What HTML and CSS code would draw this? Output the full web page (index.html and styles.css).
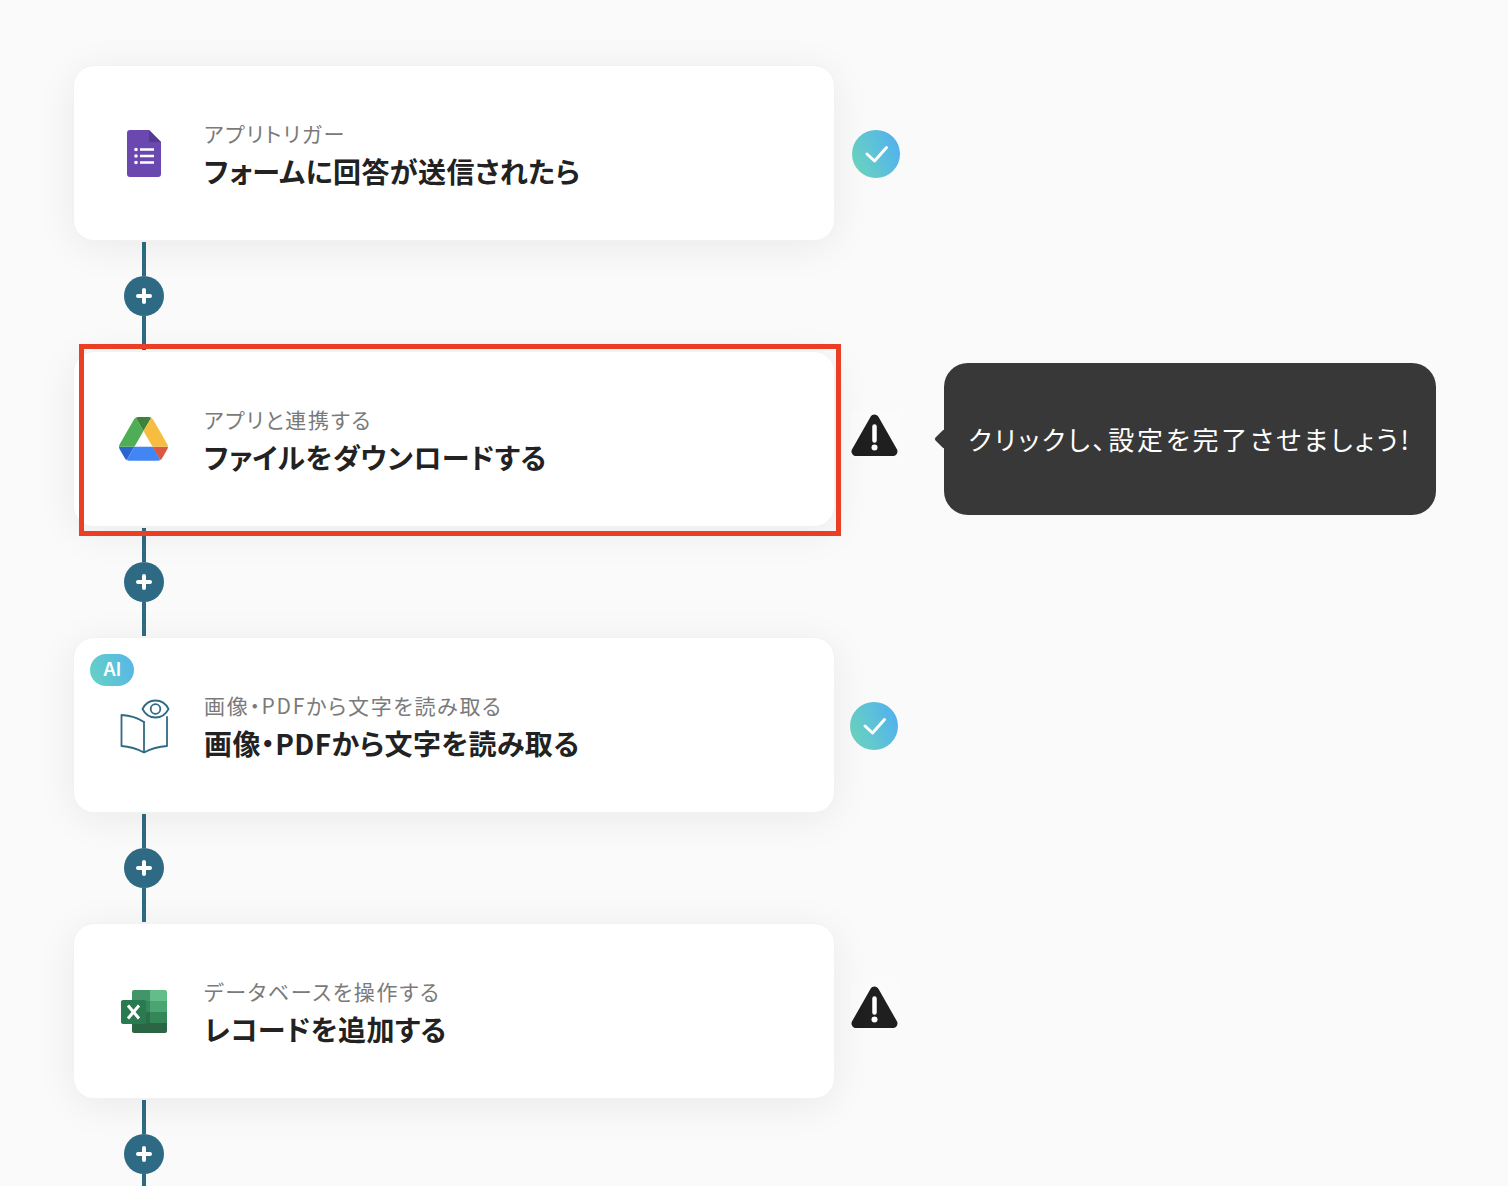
FILE: index.html

```html
<!DOCTYPE html>
<html lang="ja">
<head>
  <meta charset="UTF-8" />
  <meta name="viewport" content="width=device-width, initial-scale=1.0"/>
  <title>フロー</title>
  <link rel="stylesheet" href="styles.css">
</head>
<body>
  <div class="flow">

    <div class="step">
      <div class="card">
        <svg class="app-icon" viewBox="0 0 60 60">
          <path d="M16 7h19l12 12v32a3 3 0 0 1-3 3H16a3 3 0 0 1-3-3V10a3 3 0 0 1 3-3z" fill="#6b48b0"/>
          <path d="M35 7l12 12H35z" fill="#553a92"/>
          <circle cx="22" cy="26.500" r="1.800" fill="#fff"/>
          <circle cx="22" cy="33" r="1.800" fill="#fff"/>
          <circle cx="22" cy="39.500" r="1.800" fill="#fff"/>
          <path d="M26 26.500h14M26 33h14M26 39.500h14" stroke="#fff" stroke-width="2.600"/>
        </svg>
        <div class="card-text">
          <div class="card-sub">アプリトリガー</div>
          <div class="card-title">フォームに回答が送信されたら</div>
        </div>
      </div>
      <div class="status status-first">
        <svg class="check" viewBox="0 0 48 48">
          <defs>
            <linearGradient id="grad1" x1="0" y1="0.8" x2="1" y2="0.4">
              <stop offset="0" stop-color="#6cd5bd"/>
              <stop offset="1" stop-color="#52b2ed"/>
            </linearGradient>
          </defs>
          <circle cx="24" cy="24" r="24" fill="url(#grad1)"/>
          <path d="M15 24l7.500 7L34.500 17.500" fill="none" stroke="#fff" stroke-width="3" stroke-linecap="round" stroke-linejoin="round"/>
        </svg>
      </div>
    </div>

    <div class="connector"><span class="line"></span><span class="plus"></span><span class="line"></span></div>

    <div class="step">
      <div class="card">
        <svg class="app-icon" viewBox="0 0 60 60">
          <g transform="translate(5 8) scale(0.561)">
            <path d="m6.600 66.850 3.850 6.650c.8 1.400 1.950 2.500 3.300 3.300l13.750-23.800h-27.500c0 1.550.4 3.100 1.200 4.500z" fill="#2b66d0"/>
            <path d="m43.650 25-13.750-23.800c-1.350.8-2.500 1.900-3.300 3.300l-25.400 44a9.060 9.060 0 0 0 -1.200 4.500h27.500z" fill="#4fae55"/>
            <path d="m73.550 76.800c1.350-.8 2.500-1.900 3.300-3.300l1.600-2.750 7.650-13.250c.8-1.400 1.200-2.950 1.200-4.500h-27.502l5.852 11.500z" fill="#dd5745"/>
            <path d="m43.650 25 13.750-23.800c-1.350-.8-2.900-1.200-4.500-1.200h-18.500c-1.600 0-3.150.45-4.500 1.200z" fill="#3a8338"/>
            <path d="m59.800 53h-32.300l-13.750 23.800c1.350.8 2.900 1.200 4.500 1.200h50.800c1.600 0 3.150-.45 4.500-1.200z" fill="#4285f4"/>
            <path d="m73.400 26.500-12.700-22c-.8-1.400-1.950-2.500-3.300-3.300l-13.750 23.800 16.150 28h27.450c0-1.550-.4-3.100-1.200-4.500z" fill="#f6bd41"/>
          </g>
        </svg>
        <div class="card-text">
          <div class="card-sub">アプリと連携する</div>
          <div class="card-title">ファイルをダウンロードする</div>
        </div>
      </div>
      <div class="status status-warn">
        <svg class="warn" viewBox="0 0 48 48">
          <path d="M24.500 8L6 40.500h37z" fill="#1f1f1f" stroke="#1f1f1f" stroke-width="9" stroke-linejoin="round"/>
          <path d="M24.500 15.500v14" stroke="#fff" stroke-width="4.500" stroke-linecap="round"/>
          <circle cx="24.500" cy="36.500" r="3" fill="#fff"/>
        </svg>
      </div>
      <div class="highlight"></div>
      <div class="tooltip">クリックし、設定を完了させましょう!</div>
    </div>

    <div class="connector"><span class="line"></span><span class="plus"></span><span class="line"></span></div>

    <div class="step">
      <div class="card">
        <span class="ai-badge">AI</span>
        <svg class="app-icon" viewBox="0 0 60 60">
          <g fill="none" stroke="#2f6a85" stroke-width="1.800" stroke-linejoin="round" stroke-linecap="round">
            <path d="M30 27c-6-4-14-6.500-22.500-7v31c8.500.5 16 3 22.500 6.500 6.500-3.500 14-6 23-6.500V22"/>
            <path d="M30 27v30"/>
            <path d="M28.500 14c3-6 8-8.500 13-8.500s10 2.500 13 8.500c-3 6-8 8.500-13 8.500s-10-2.500-13-8.500z" fill="#fff"/>
            <circle cx="41.500" cy="14" r="4.800"/>
          </g>
        </svg>
        <div class="card-text">
          <div class="card-sub">画像・PDFから文字を読み取る</div>
          <div class="card-title">画像・PDFから文字を読み取る</div>
        </div>
      </div>
      <div class="status status-check">
        <svg class="check" viewBox="0 0 48 48">
          <circle cx="24" cy="24" r="24" fill="url(#grad1)"/>
          <path d="M15 24l7.500 7L34.500 17.500" fill="none" stroke="#fff" stroke-width="3" stroke-linecap="round" stroke-linejoin="round"/>
        </svg>
      </div>
    </div>

    <div class="connector"><span class="line"></span><span class="plus"></span><span class="line"></span></div>

    <div class="step">
      <div class="card">
        <svg class="app-icon" viewBox="0 0 60 60">
          <path d="M20 9h16v11H18V11a2 2 0 0 1 2-2z" fill="#429469"/>
          <path d="M36 9h15a2 2 0 0 1 2 2v9H36z" fill="#62bd88"/>
          <path d="M18 20h18v11H18z" fill="#358659"/>
          <path d="M36 20h17v11H36z" fill="#4aa572"/>
          <path d="M18 31h18v11H18z" fill="#2a6f4a"/>
          <path d="M36 31h17v11H36z" fill="#358659"/>
          <path d="M18 42h35v8a2 2 0 0 1-2 2H20a2 2 0 0 1-2-2z" fill="#2a6644"/>
          <rect x="7" y="19" width="25" height="24" rx="2" fill="#2a7a50"/>
          <path d="M14 24.500l11 13M25 24.500l-11 13" stroke="#fff" stroke-width="3"/>
        </svg>
        <div class="card-text">
          <div class="card-sub">データベースを操作する</div>
          <div class="card-title">レコードを追加する</div>
        </div>
      </div>
      <div class="status status-warn">
        <svg class="warn" viewBox="0 0 48 48">
          <path d="M24.500 8L6 40.500h37z" fill="#1f1f1f" stroke="#1f1f1f" stroke-width="9" stroke-linejoin="round"/>
          <path d="M24.500 15.500v14" stroke="#fff" stroke-width="4.500" stroke-linecap="round"/>
          <circle cx="24.500" cy="36.500" r="3" fill="#fff"/>
        </svg>
      </div>
    </div>

    <div class="connector"><span class="line"></span><span class="plus"></span><span class="line"></span></div>

  </div>
</body>
</html>
```

FILE: styles.css

```css
html, body {
  margin: 0;
  padding: 0;
  height: 1186px;
  overflow: hidden;
}
body {
  font-family: "Noto Sans CJK JP", "Noto Sans", sans-serif;
  background-color: #fafafa;
}
.flow {
  display: flex;
  flex-direction: column;
  padding: 66px 0 0 74px;
}
.step {
  position: relative;
  display: flex;
  align-items: center;
}
.card {
  position: relative;
  box-sizing: border-box;
  width: 760px;
  height: 174px;
  display: flex;
  align-items: center;
  gap: 30px;
  padding-left: 40px;
  background-color: #fff;
  border-radius: 20px;
  box-shadow: 0 0 0 1px #f2f2f2, 0 6px 40px rgba(0,0,0,0.07);
}
.app-icon {
  width: 60px;
  height: 60px;
  flex-shrink: 0;
}
.card-text {
  display: flex;
  flex-direction: column;
  gap: 3px;
  padding-top: 1px;
  font-feature-settings: "palt";
}
.card-sub {
  font-size: 21px;
  line-height: 32px;
  letter-spacing: 1.700px;
  color: #7a7a7a;
}
.card-title {
  font-size: 28px;
  line-height: 38px;
  font-weight: 700;
  letter-spacing: 0.400px;
  color: #222;
}
.ai-badge {
  position: absolute;
  left: 16px;
  top: 16px;
  width: 44px;
  height: 32px;
  border-radius: 16px;
  background: linear-gradient(70deg, #66d2c4, #56b5e8);
  color: #fff;
  font-family: "Inter", sans-serif;
  font-size: 18px;
  font-weight: 600;
  line-height: 32px;
  text-align: center;
}
.status {
  display: flex;
  margin-left: 16px;
}
.status-first {
  margin-left: 18px;
  margin-top: 2px;
}
.status-check {
  margin-top: 2px;
}
.status-warn {
  margin-bottom: 8px;
  background-color: #fbfbfb;
}
.check, .warn {
  display: block;
  width: 48px;
  height: 48px;
}
.connector {
  height: 112px;
  box-sizing: border-box;
  padding: 2px 0;
  width: 40px;
  margin-left: 50px;
  display: flex;
  flex-direction: column;
  align-items: center;
  flex-shrink: 0;
}
.line {
  width: 4px;
  flex: 1;
  background-color: #2f6a85;
}
.plus {
  position: relative;
  width: 40px;
  height: 40px;
  border-radius: 50%;
  background-color: #2f6a85;
  flex-shrink: 0;
}
.plus::before, .plus::after {
  content: "";
  position: absolute;
  background-color: #fff;
  border-radius: 2px;
}
.plus::before {
  left: 12px;
  top: 18px;
  width: 16px;
  height: 4px;
}
.plus::after {
  left: 18px;
  top: 12px;
  width: 4px;
  height: 16px;
}
.highlight {
  position: absolute;
  left: 5px;
  top: -8px;
  box-sizing: border-box;
  width: 762px;
  height: 192px;
  border: 5px solid #ea3f25;
  pointer-events: none;
}
.tooltip {
  position: absolute;
  left: 870px;
  top: 11px;
  box-sizing: border-box;
  width: 492px;
  height: 152px;
  padding-bottom: 2px;
  display: flex;
  align-items: center;
  justify-content: center;
  background-color: #383838;
  border-radius: 24px;
  color: #fff;
  font-size: 26px;
  letter-spacing: 2.750px;
  font-feature-settings: "palt";
  white-space: nowrap;
}
.tooltip::before {
  content: "";
  position: absolute;
  left: -7px;
  top: 69px;
  width: 14px;
  height: 14px;
  background-color: #383838;
  transform: rotate(45deg);
  border-radius: 2px;
}
```
